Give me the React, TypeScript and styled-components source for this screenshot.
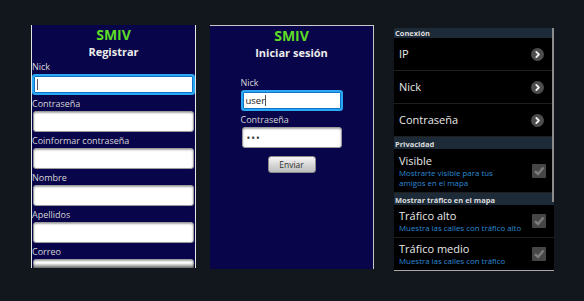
import React from 'react';
import styled, { createGlobalStyle } from 'styled-components';

const GlobalStyle = createGlobalStyle`
    html, body {
        margin: 0;
        padding: 0;
        background: #12171e;
    }
    body {
        font-family: "Open Sans", "DejaVu Sans", sans-serif;
    }
`;

const Page = styled.div`
    display: flex;
    align-items: flex-start;
    width: 584px;
    height: 301px;
    box-sizing: border-box;
    padding: 25px 0 0 31px;
    overflow: hidden;
`;

const Screen = styled.div`
    position: relative;
    box-sizing: border-box;
    background: #09054a;
    overflow: hidden;
`;

const RegisterScreen = styled(Screen)`
    width: 165px;
    height: 243px;
    border-left: 1px solid #e4e4e4;
    border-right: 1px solid #e4e4e4;
    &::after {
        content: '';
        position: absolute;
        left: 0;
        right: 0;
        bottom: 0;
        height: 5px;
        background: linear-gradient(rgba(0, 0, 0, 0), rgba(0, 0, 0, 0.6));
    }
`;

const LoginScreen = styled(Screen)`
    margin-left: 14px;
    width: 164px;
    height: 244px;
    border-top: 1px solid #c8c8c8;
    border-right: 1px solid #c8c8c8;
`;

const Logo = styled.div`
    font-size: 14px;
    font-weight: 700;
    line-height: 20px;
    color: #5ddc24;
    text-align: center;
`;

const Title = styled.div`
    font-size: 11px;
    font-weight: 700;
    line-height: 13px;
    color: #ececec;
    text-align: center;
`;

const Form = styled.div<{ $width?: number; $top?: number }>`
    display: flex;
    flex-direction: column;
    width: ${(p) => (p.$width ? `${p.$width}px` : 'auto')};
    margin: ${(p) => p.$top || 0}px auto 0;
`;

const Label = styled.div`
    margin-top: 3px;
    font-size: 9px;
    line-height: 12px;
    color: #d6d6d6;
    white-space: nowrap;
`;

const Input = styled.div<{ $focused?: boolean }>`
    position: relative;
    box-sizing: border-box;
    height: 21px;
    margin: 1px ${(p) => (p.$focused ? '0' : '1px')} 0;
    padding-left: ${(p) => (p.$focused ? '3px' : '4px')};
    display: flex;
    align-items: center;
    background: #fff;
    border: ${(p) => (p.$focused ? '2px solid #2aa6f2' : '1px solid #9c9c9c')};
    border-radius: 3px;
    box-shadow: ${(p) => (p.$focused ? 'inset 0 0 0 1px #0f74c8' : 'inset 0 1px 2px rgba(0, 0, 0, 0.35)')};
    font-size: 9.5px;
    color: #222;
`;

const Caret = styled.span`
    display: inline-block;
    width: 1px;
    height: 11px;
    background: #555;
`;

const Dots = styled.span`
    font-size: 10px;
    letter-spacing: 1px;
    color: #333;
`;

const Button = styled.div`
    align-self: center;
    box-sizing: border-box;
    width: 48px;
    height: 17px;
    margin-top: 8px;
    display: flex;
    align-items: center;
    justify-content: center;
    background: linear-gradient(#f6f6f6, #d2d2d2 60%, #bdbdbd);
    border: 1px solid #8a8a8a;
    border-radius: 3px;
    font-size: 8.5px;
    color: #333;
`;

const SettingsScreen = styled.div`
    position: relative;
    box-sizing: border-box;
    margin: 3px 0 0 20px;
    width: 160px;
    height: 243px;
    background: #000;
    border-bottom: 1px solid #a8a8a8;
    overflow: hidden;
`;

const List = styled.div`
    margin-top: -2px;
`;

const Scrollbar = styled.div`
    position: absolute;
    top: 0;
    right: 0;
    width: 2px;
    height: 174px;
    background: #8c8c8c;
`;

const SectionHeader = styled.div`
    height: 12px;
    padding-left: 1px;
    display: flex;
    align-items: flex-end;
    background: #1d2a38;
    font-size: 7.5px;
    font-weight: 700;
    line-height: 10px;
    color: #dcdcdc;
    white-space: nowrap;
`;

const Row = styled.div<{ $height: number }>`
    box-sizing: border-box;
    height: ${(p) => p.$height}px;
    padding: 0 8px 0 5px;
    display: flex;
    align-items: center;
    justify-content: space-between;
    border-bottom: 1px solid #1f1f1f;
`;

const RowText = styled.div`
    display: flex;
    flex-direction: column;
`;

const RowTitle = styled.div`
    font-size: 11px;
    line-height: 14px;
    color: #e8e8e8;
    white-space: nowrap;
`;

const RowSub = styled.div`
    font-size: 7.9px;
    line-height: 10px;
    color: #2d8ad6;
    white-space: nowrap;
`;

const Chevron = () => (
    <svg width="13" height="13" viewBox="0 0 13 13" style={{ marginRight: 2 }}>
        <circle cx="6.5" cy="6.5" r="6.5" fill="#4d4d4d" />
        <path d="M5.3 3.9 L7.9 6.5 L5.3 9.1" fill="none" stroke="#f2f2f2" strokeWidth="1.8" strokeLinecap="round" strokeLinejoin="round" />
    </svg>
);

const Check = () => (
    <svg width="14" height="14" viewBox="0 0 14 14">
        <rect x="0" y="0" width="14" height="14" rx="1" fill="#464646" />
        <path d="M3 7.2 L6 10 L11.5 3.5" fill="none" stroke="#7c7c7c" strokeWidth="2.4" />
    </svg>
);

const regFields = ['Nick', 'Contraseña', 'Coinformar contraseña', 'Nombre', 'Apellidos', 'Correo'];

function App() {
    return (
        <>
            <GlobalStyle />
            <Page>
                <RegisterScreen>
                    <Logo>SMIV</Logo>
                    <Title>Registrar</Title>
                    <Form>
                        {regFields.map((f, i) => (
                            <React.Fragment key={f}>
                                <Label>{f}</Label>
                                <Input $focused={i === 0}>{i === 0 && <Caret />}</Input>
                            </React.Fragment>
                        ))}
                    </Form>
                </RegisterScreen>

                <LoginScreen>
                    <Logo>SMIV</Logo>
                    <Title>Iniciar sesión</Title>
                    <Form $width={102} $top={15}>
                        <Label>Nick</Label>
                        <Input $focused>
                            user
                            <Caret />
                        </Input>
                        <Label>Contraseña</Label>
                        <Input>
                            <Dots>•••</Dots>
                        </Input>
                        <Button>Enviar</Button>
                    </Form>
                </LoginScreen>

                <SettingsScreen>
                    <List>
                        <SectionHeader>Conexión</SectionHeader>
                        <Row $height={33}>
                            <RowTitle>IP</RowTitle>
                            <Chevron />
                        </Row>
                        <Row $height={33}>
                            <RowTitle>Nick</RowTitle>
                            <Chevron />
                        </Row>
                        <Row $height={33}>
                            <RowTitle>Contraseña</RowTitle>
                            <Chevron />
                        </Row>
                        <SectionHeader>Privacidad</SectionHeader>
                        <Row $height={44}>
                            <RowText>
                                <RowTitle>Visible</RowTitle>
                                <RowSub>Mostrarte visible para tus</RowSub>
                                <RowSub>amigos en el mapa</RowSub>
                            </RowText>
                            <Check />
                        </Row>
                        <SectionHeader>Mostrar tráfico en el mapa</SectionHeader>
                        <Row $height={33}>
                            <RowText>
                                <RowTitle>Tráfico alto</RowTitle>
                                <RowSub>Muestra las calles con tráfico alto</RowSub>
                            </RowText>
                            <Check />
                        </Row>
                        <Row $height={33}>
                            <RowText>
                                <RowTitle>Tráfico medio</RowTitle>
                                <RowSub>Muestra las calles con tráfico</RowSub>
                            </RowText>
                            <Check />
                        </Row>
                    </List>
                    <Scrollbar />
                </SettingsScreen>
            </Page>
        </>
    );
}

export default App;
